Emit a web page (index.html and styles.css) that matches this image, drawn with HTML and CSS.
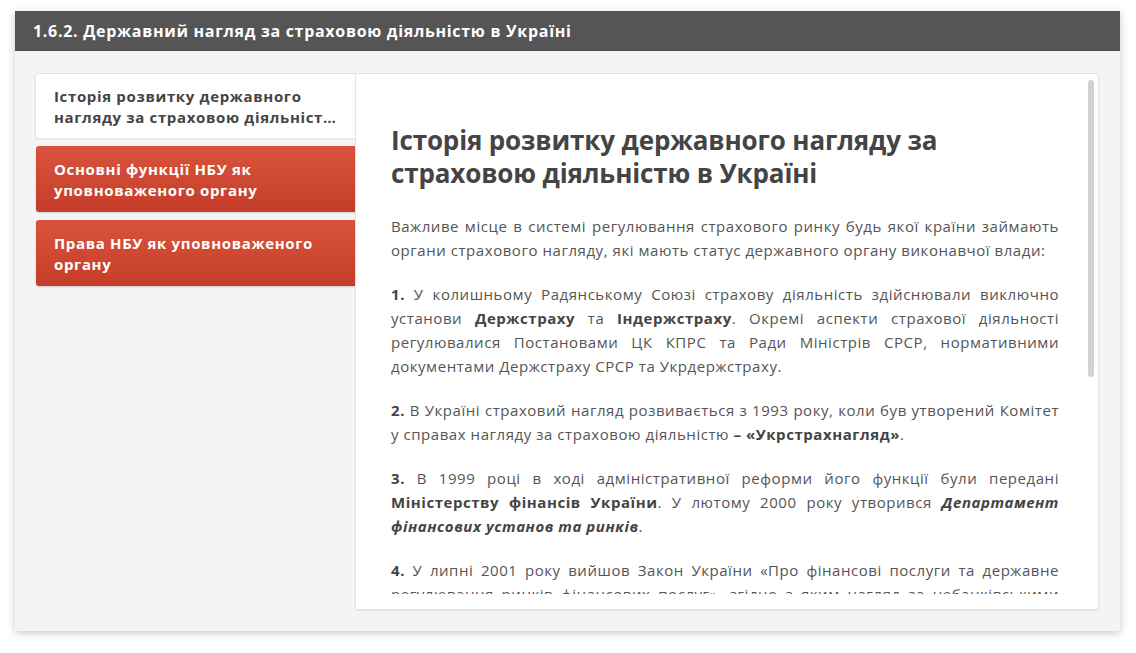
FILE: index.html
```html
<!DOCTYPE html>
<html lang="uk">
<head>
<meta charset="utf-8">
<title>Державний нагляд</title>
<link rel="stylesheet" href="styles.css">
</head>
<body>
<div class="card">
  <div class="card-header">1.6.2. Державний нагляд за страховою діяльністю в Україні</div>
  <div class="card-body">
    <nav class="tabs">
      <div class="tab tab-active"><span class="tab-label">Історія розвитку державного нагляду за страховою діяльністю в Україні</span></div>
      <div class="tab tab-red"><span class="tab-label">Основні функції НБУ як уповноваженого органу</span></div>
      <div class="tab tab-red"><span class="tab-label">Права НБУ як уповноваженого органу</span></div>
    </nav>
    <section class="panel">
      <div class="panel-scroll">
        <h2 class="panel-title">Історія розвитку державного нагляду за страховою діяльністю в Україні</h2>
        <p>Важливе місце в системі регулювання страхового ринку будь якої країни займають органи страхового нагляду, які мають статус державного органу виконавчої влади:</p>
        <p><b>1.</b> У колишньому Радянському Союзі страхову діяльність здійснювали виключно установи <b>Держстраху</b> та <b>Індержстраху</b>. Окремі аспекти страхової діяльності регулювалися Постановами ЦК КПРС та Ради Міністрів СРСР, нормативними документами Держстраху СРСР та Укрдержстраху.</p>
        <p><b>2.</b> В Україні страховий нагляд розвивається з 1993 року, коли був утворений Комітет у справах нагляду за страховою діяльністю <b>– «Укрстрахнагляд»</b>.</p>
        <p><b>3.</b> В 1999 році в ході адміністративної реформи його функції були передані <b>Міністерству фінансів України</b>. У лютому 2000 року утворився <b><i>Департамент фінансових установ та ринків</i></b>.</p>
        <p><b>4.</b> У липні 2001 року вийшов Закон України «Про фінансові послуги та державне регулювання ринків фінансових послуг», згідно з яким нагляд за небанківськими фінансовими установами здійснює уповноважений орган.</p>
      </div>
      <div class="scroll-thumb"></div>
    </section>
  </div>
</div>
</body>
</html>
```

FILE: styles.css
```css
html, body {
  margin: 0;
  padding: 0;
  background: #ffffff;
}
body {
  padding: 11px 16px 22px 15px;
  font-family: "Open Sans", "Noto Sans", sans-serif;
}
.card {
  display: flex;
  flex-direction: column;
  height: 620px;
  background: #f4f4f4;
  box-shadow: 0 2px 8px rgba(0, 0, 0, 0.22);
}
.card-header {
  height: 40px;
  line-height: 40px;
  padding: 0 18px;
  background: #555555;
  color: #ffffff;
  font-weight: 700;
  font-size: 16px;
  letter-spacing: 0.7px;
  border-bottom: 1px solid #4a4a4a;
  box-sizing: border-box;
}
.card-body {
  flex: 1;
  display: flex;
  padding: 22px 21px 21px 21px;
  min-height: 0;
}
.tabs {
  width: 319px;
  flex: none;
  display: flex;
  flex-direction: column;
  gap: 8px;
}
.tab {
  height: 66px;
  box-sizing: border-box;
  padding: 13px 14px 0 18px;
  font-weight: 700;
  font-size: 15px;
  line-height: 21px;
  letter-spacing: 0.65px;
  border-radius: 3px 0 0 3px;
}
.tab-label {
  display: -webkit-box;
  -webkit-box-orient: vertical;
  -webkit-line-clamp: 2;
  overflow: hidden;
}
.tab-active {
  height: 65px;
  background: #ffffff;
  color: #444444;
  border-top: 1px solid #e2e2e2;
  box-shadow: -1px 1px 2px rgba(0, 0, 0, 0.08);
  padding-top: 12px;
}
.tab-red {
  background: linear-gradient(#d8533d, #c53d28);
  color: #ffffff;
  box-shadow: 0 1px 2px rgba(0, 0, 0, 0.15);
}
.panel {
  position: relative;
  flex: 1;
  background: #ffffff;
  border: 1px solid #e3e3e3;
  border-radius: 0 3px 3px 3px;
  padding: 0 39px 15px 35px;
  display: flex;
  flex-direction: column;
  box-shadow: 0 1px 2px rgba(0, 0, 0, 0.06);
}
.panel-scroll {
  flex: 1;
  overflow: hidden;
  min-height: 0;
  padding-top: 50px;
}
.panel-title {
  margin: 0 0 24px 0;
  font-size: 26px;
  line-height: 33px;
  font-weight: 700;
  letter-spacing: -0.15px;
  color: #444444;
}
.panel-scroll p {
  margin: 0 0 20px 0;
  font-size: 15px;
  line-height: 24px;
  letter-spacing: 0.55px;
  color: #555555;
  text-align: justify;
}
.panel-scroll b {
  color: #444444;
}
.scroll-thumb {
  position: absolute;
  top: 6px;
  right: 4px;
  width: 6px;
  height: 297px;
  border-radius: 3px;
  background: #d2d2d2;
}
```
